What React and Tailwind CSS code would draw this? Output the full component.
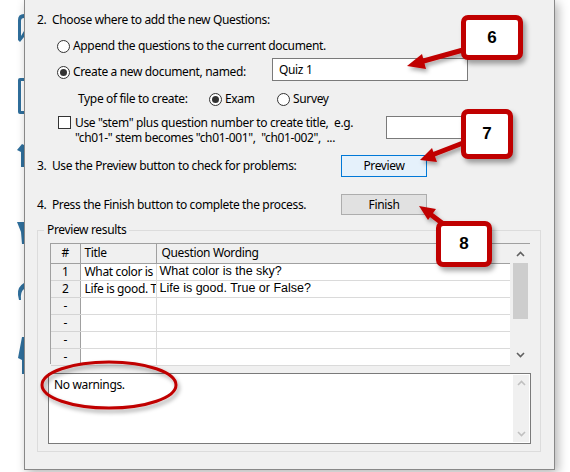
import React from "react";

const Radio = ({ checked }) => (
	<span className="w-[13px] h-[13px] rounded-full border border-[#333] bg-white flex items-center justify-center shrink-0">
		{checked && <span className="w-[7px] h-[7px] rounded-full bg-[#333]" />}
	</span>
);

const Callout = ({ n, className }) => (
	<div
		className={`absolute flex items-center justify-center bg-white border-[5px] border-[#c00000] rounded-[7px] shadow-[3px_4px_5px_rgba(0,0,0,0.35)] font-['Liberation_Sans'] font-bold text-[17px] tracking-normal text-black ${className}`}
	>
		{n}
	</div>
);

const ScrollArrow = ({ up, color }) => (
	<svg width="9" height="6" viewBox="0 0 9 6" className={up ? "" : "rotate-180"}>
		<path d="M1 5 L4.5 1.5 L8 5" fill="none" stroke={color} strokeWidth="1.6" />
	</svg>
);

// toolbar behind the dialog, only its edge shows
const SideStrip = () => (
	<div className="w-[24px] shrink-0 h-full">
		<svg width="24" height="472" viewBox="0 0 24 472" fill="#2f6f9c">
			<path d="M18 20 Q18 14 24 14 L24 18 Q21 18 21 21 L21 36 L24 31 L24 37 L20 42 L18 40 Z" />
			<path d="M18 80 Q18 78 20 78 L24 78 L24 81 L21 81 L21 111 L24 111 L24 114 L20 114 Q18 114 18 112 Z" />
			<path d="M17 150 L22 144 L24 145 L24 167 L21 167 L21 152 Z" />
			<path d="M17 222 L24 222 L24 244 L22 244 L21 232 Z" />
			<path d="M24 283 Q17 287 18 295 L19 300 L21 300 Q20 292 24 289 Z" />
			<path d="M18 358 L22 337 L24 337 L24 374 L22 374 L22 360 Z" />
		</svg>
	</div>
);

const rows = [
	{ n: "1", title: "What color is", q: "What color is the sky?" },
	{ n: "2", title: "Life is good. T", q: "Life is good. True or False?" },
	{ n: "-", title: "", q: "" },
	{ n: "-", title: "", q: "" },
	{ n: "-", title: "", q: "" },
	{ n: "-", title: "", q: "" },
];

const App = () => {
	return (
		<div className="relative w-[570px] h-[472px] bg-white flex overflow-hidden font-['Noto_Sans'] text-[12px] tracking-[-0.35px] text-black">
			<SideStrip />

			{/* Dialog window */}
			<div className="w-[531px] h-[470px] shrink-0 bg-[#f0f0f0] border-x border-b border-[#888] shadow-[3px_3px_10px_rgba(0,0,0,0.3)] flex flex-col pl-[12px]">
				<div className="mt-[12px] h-[16px] leading-[16px]">2.&nbsp; Choose where to add the new Questions:</div>

				<div className="mt-[10px] h-[16px] pl-[20px] flex items-center gap-[3px]">
					<Radio />
					<span>Append the questions to the current document.</span>
				</div>

				<div className="mt-[4px] h-[23px] flex">
					<div className="pl-[20px] pt-[6px] flex items-start gap-[3px] w-[235px]">
						<span className="mt-[2px]"><Radio checked /></span>
						<span className="leading-[16px]">Create a new document, named:</span>
					</div>
					<div className="w-[196px] h-[23px] bg-white border border-[#7a7a7a] px-[6px] leading-[21px]">Quiz 1</div>
				</div>

				<div className="mt-[10px] h-[16px] flex items-center">
					<span className="pl-[41px] w-[172px]">Type of file to create:</span>
					<span className="flex items-center gap-[3px] w-[68px]">
						<Radio checked />
						Exam
					</span>
					<span className="flex items-center gap-[3px]">
						<Radio />
						Survey
					</span>
				</div>

				<div className="mt-[9px] h-[31px] flex">
					<div className="pl-[21px] flex gap-[4px] w-[349px]">
						<span className="w-[13px] h-[13px] border border-[#333] bg-white shrink-0" />
						<div className="leading-[15px] -mt-[1px]">
							<div>Use "stem" plus question number to create title,&nbsp; e.g.</div>
							<div>"ch01-" stem becomes "ch01-001",&nbsp; "ch01-002",&nbsp; ...</div>
						</div>
					</div>
					<div className="w-[82px] h-[23px] bg-white border border-[#7a7a7a]" />
				</div>

				<div className="mt-[8px] h-[22px] flex items-center">
					<span className="w-[304px]">3.&nbsp; Use the Preview button to check for problems:</span>
					<button className="w-[86px] h-[22px] bg-[#e5f1fb] border border-[#0078d7] text-[12px]">Preview</button>
				</div>

				<div className="mt-[17px] h-[21px] flex items-center">
					<span className="w-[304px]">4.&nbsp; Press the Finish button to complete the process.</span>
					<button className="w-[86px] h-[21px] bg-[#e1e1e1] border border-[#adadad] text-[12px]">Finish</button>
				</div>

				{/* Preview results group */}
				<div className="relative mt-[15px] w-[504px] h-[222px] border border-[#dcdcdc] pt-[12px] pl-[12px]">
					<span className="absolute -top-[9px] left-[6px] px-[3px] bg-[#f0f0f0] leading-[16px]">Preview results</span>

					<div className="flex w-[480px] h-[121px] border-t border-l border-[#a0a0a0] bg-[#f0f0f0]">
						<table className="border-collapse w-[459px] table-fixed self-start">
							<colgroup>
								<col className="w-[29px]" />
								<col className="w-[76px]" />
								<col className="w-[354px]" />
							</colgroup>
							<thead>
								<tr className="h-[19px] bg-[#f0f0f0]">
									<th className="font-normal text-center border-r border-b border-[#a0a0a0] p-0 leading-none">#</th>
									<th className="font-normal text-left pl-[4px] border-r border-b border-[#a0a0a0] p-0 leading-none">Title</th>
									<th className="font-normal text-left pl-[5px] border-b border-[#a0a0a0] p-0 leading-none">Question Wording</th>
								</tr>
							</thead>
							<tbody>
								{rows.map((r, i) => (
									<tr key={i} className="h-[17px]">
										<td className="bg-[#f0f0f0] text-center border-r border-b border-[#a0a0a0] border-b-[#d4d4d4] p-0 leading-none">{r.n}</td>
										<td className="bg-white pl-[4px] border-r border-b border-[#dadada] p-0 leading-none whitespace-nowrap overflow-hidden">{r.title}</td>
										<td className="bg-white pl-[3px] border-b border-[#dadada] p-0 leading-none font-['Liberation_Sans'] text-[12.5px] tracking-normal whitespace-nowrap overflow-hidden">{r.q}</td>
									</tr>
								))}
							</tbody>
						</table>

						{/* vertical scrollbar */}
						<div className="w-[20px] h-[120px] bg-[#f0f0f0] border-l border-[#f0f0f0] flex flex-col items-center">
							<div className="h-[19px] flex items-center justify-center">
								<ScrollArrow up color="#606060" />
							</div>
							<div className="w-[15px] h-[56px] bg-[#cdcdcd]" />
							<div className="flex-1" />
							<div className="h-[19px] flex items-center justify-center">
								<ScrollArrow color="#606060" />
							</div>
						</div>
					</div>

					<div className="mt-[9px] -ml-[2px] w-[483px] h-[71px] bg-white border border-[#7a7a7a] flex">
						<div className="flex-1 pl-[5px] pt-[3px] leading-[16px]">No warnings.</div>
						<div className="w-[16px] my-[1px] mr-[1px] bg-[#f0f0f0] flex flex-col items-center justify-between py-[5px]">
							<ScrollArrow up color="#c0c0c0" />
							<ScrollArrow color="#c0c0c0" />
						</div>
					</div>
				</div>
			</div>

			{/* Annotation overlay: arrows and ring */}
			<svg className="absolute inset-0 pointer-events-none" width="570" height="472" viewBox="0 0 570 472">
				<defs>
					<filter id="sh" x="-20%" y="-20%" width="140%" height="160%">
						<feDropShadow dx="2" dy="3" stdDeviation="2" floodColor="#000" floodOpacity="0.35" />
					</filter>
				</defs>
				<g filter="url(#sh)" fill="#c00000" stroke="#c00000">
					<line x1="463" y1="50" x2="420" y2="62" strokeWidth="5" />
					<polygon points="407,66 422,54 426,69" stroke="none" />
					<line x1="463" y1="143" x2="432" y2="155" strokeWidth="5" />
					<polygon points="420,160 432,148 437,162" stroke="none" />
					<line x1="446" y1="226" x2="430" y2="214" strokeWidth="5" />
					<polygon points="419,206 436,209 428,220" stroke="none" />
				</g>
				<ellipse cx="109" cy="385" rx="67" ry="23" fill="none" stroke="#c00000" strokeWidth="3" filter="url(#sh)" />
			</svg>

			<Callout n="6" className="left-[461px] top-[15px] w-[62px] h-[45px]" />
			<Callout n="7" className="left-[461px] top-[109px] w-[52px] h-[50px]" />
			<Callout n="8" className="left-[436px] top-[221px] w-[56px] h-[46px]" />
		</div>
	);
};

export default App;
